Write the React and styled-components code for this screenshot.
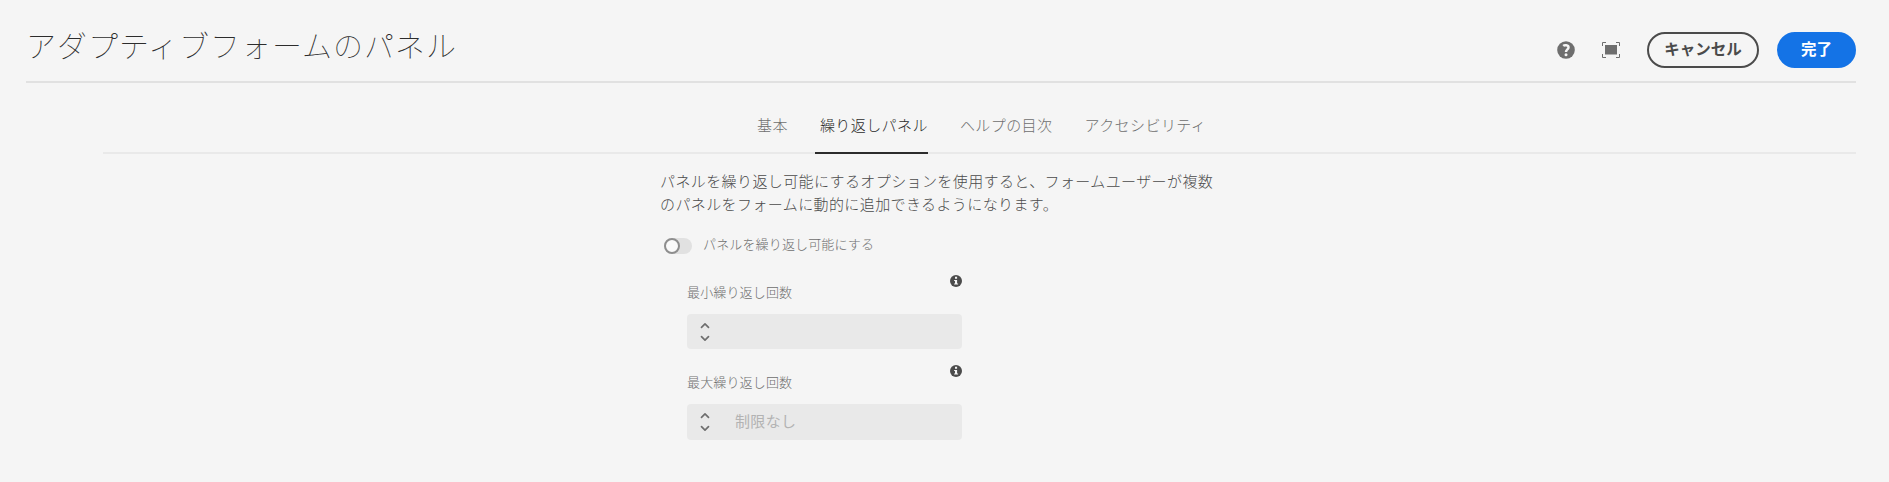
import React from "react";
import styled, { createGlobalStyle } from "styled-components";

const GlobalStyle = createGlobalStyle`
  * { box-sizing: border-box; }
  body {
    margin: 0;
    background: #f5f5f5;
    font-family: "Noto Sans CJK JP", sans-serif;
    font-weight: 200;
    color: #4b4b4b;
  }
  button, input { font-family: inherit; }
`;

const Page = styled.div`
  height: 482px;
  padding: 0 33px 0 26px;
  overflow: hidden;
`;

const Header = styled.header`
  height: 83px;
  display: flex;
  align-items: flex-start;
  justify-content: space-between;
  border-bottom: 2px solid #e1e1e1;
`;

const Title = styled.h1`
  margin: 23px 0 0;
  font-size: 30px;
  line-height: 42px;
  font-weight: 100;
  letter-spacing: 0.98px;
  color: #2c2c2c;
  white-space: nowrap;
`;

const Actions = styled.div`
  display: flex;
  align-items: center;
  margin-top: 32px;
`;

const IconButton = styled.button`
  display: flex;
  width: 18px;
  height: 18px;
  padding: 0;
  margin-right: 27px;
  border: 0;
  background: none;
  color: #6e6e6e;
`;

const PillButton = styled.button`
  width: ${(p) => (p.$primary ? 79 : 112)}px;
  height: 36px;
  padding: 0 0 4px;
  margin-left: ${(p) => (p.$primary ? 18 : 0)}px;
  border: 2px solid ${(p) => (p.$primary ? "#1473e6" : "#4b4b4b")};
  border-radius: 18px;
  background: ${(p) => (p.$primary ? "#1473e6" : "transparent")};
  color: ${(p) => (p.$primary ? "#fff" : "#4b4b4b")};
  font-size: 15.5px;
  line-height: 20px;
  font-weight: 700;
  white-space: nowrap;
`;

const Tabs = styled.nav`
  height: 71px;
  margin-left: 77px;
  padding-left: 649px;
  display: flex;
  align-items: flex-end;
  gap: 27px;
  border-bottom: 2px solid #e9e9e9;
`;

const Tab = styled.a`
  height: 45px;
  margin-bottom: -2px;
  padding-left: 5px;
  border-bottom: 2px solid ${(p) => (p.$active ? "#2c2c2c" : "transparent")};
  color: ${(p) => (p.$active ? "#2c2c2c" : "#6e6e6e")};
  font-size: 15px;
  line-height: 32px;
  letter-spacing: 0.43px;
  white-space: nowrap;
`;

const Content = styled.main`
  width: 570px;
  margin-left: 633px;
  padding-top: 15px;
`;

const Description = styled.p`
  margin: 0;
  padding-left: 1px;
  font-size: 15px;
  line-height: 23px;
  letter-spacing: 0.4px;
  white-space: nowrap;
`;

const ToggleRow = styled.label`
  display: flex;
  align-items: center;
  gap: 11px;
  height: 16px;
  margin: 23px 0 0 5px;
`;

const Track = styled.span`
  width: 28px;
  height: 16px;
  border-radius: 8px;
  background: #e1e1e1;
`;

const Knob = styled.span`
  display: block;
  width: 16px;
  height: 16px;
  border: 2px solid #8e8e8e;
  border-radius: 50%;
  background: #fafafa;
`;

const LabelText = styled.span`
  margin-top: -4px;
  font-size: 13px;
  line-height: 18px;
  letter-spacing: 0.15px;
  color: #6e6e6e;
  white-space: nowrap;
`;

const Fields = styled.div`
  width: 275px;
  margin: 21px 0 0 28px;
`;

const Field = styled.div`
  height: 90.3px;
`;

const FieldHead = styled.div`
  height: 38.9px;
  display: flex;
  justify-content: space-between;
  align-items: flex-start;
`;

const FieldLabel = styled(LabelText)`
  margin-top: 8px;
`;

const InfoMark = styled.span`
  display: flex;
  width: 12px;
  height: 12px;
  color: #4b4b4b;
`;

const NumberBox = styled.div`
  height: 35.5px;
  display: flex;
  align-items: center;
  padding-left: 13px;
  border-radius: 4px;
  background: #e9e9e9;
`;

const Stepper = styled.span`
  display: flex;
  width: 10px;
  height: 20px;
  color: #6e6e6e;
`;

const Input = styled.input`
  flex: 1;
  min-width: 0;
  height: 32px;
  margin-left: 25px;
  padding: 0 0 3px;
  border: 0;
  outline: 0;
  background: transparent;
  font-size: 15px;
  font-weight: 400;
  letter-spacing: 0.35px;
  &::placeholder { color: #b3b3b3; opacity: 1; }
`;

const HelpIcon = () => (
  <svg width="18" height="18" viewBox="0 0 18 18" fill="none">
    <circle cx="9" cy="9" r="8.8" fill="currentColor" />
    <path d="M6.200 4.900C7.400 3.900 11.500 3.800 11.500 6.400C11.500 8.300 9 8.400 9 10.900" stroke="#f5f5f5" strokeWidth="2.500" />
    <circle cx="9" cy="13.700" r="1.500" fill="#f5f5f5" />
  </svg>
);

const FullScreenIcon = () => (
  <svg width="18" height="18" viewBox="0 0 18 18" fill="none">
    <rect x="3" y="4" width="12" height="9.500" fill="currentColor" />
    <path d="M.5 5V1.500H4M14 1.500h3.500V5M17.500 13v3.500H14M4 16.500H.5V13" stroke="currentColor" />
  </svg>
);

const InfoIcon = () => (
  <svg width="12" height="12" viewBox="0 0 12 12">
    <circle cx="6" cy="6" r="6" fill="currentColor" />
    <path d="M5 1.800h2.100v1.900H5zM4.100 4.900h3v3.500h1v1.200H4.100V8.400h.9V6.100h-.9z" fill="#f5f5f5" />
  </svg>
);

const ChevronsIcon = () => (
  <svg width="10" height="20" viewBox="0 0 10 20" fill="none" stroke="currentColor" strokeWidth="1.700" strokeLinecap="round" strokeLinejoin="round">
    <path d="M1.500 5.300L5 1.900l3.500 3.400M1.500 14.700L5 18.100l3.500-3.400" />
  </svg>
);

const TABS = ["基本", "繰り返しパネル", "ヘルプの目次", "アクセシビリティ"];
const FIELDS = [
  { label: "最小繰り返し回数", placeholder: "" },
  { label: "最大繰り返し回数", placeholder: "制限なし" },
];

export default function App() {
  return (
    <Page lang="ja">
      <GlobalStyle />
      <Header>
        <Title>アダプティブフォームのパネル</Title>
        <Actions>
          <IconButton><HelpIcon /></IconButton>
          <IconButton><FullScreenIcon /></IconButton>
          <PillButton>キャンセル</PillButton>
          <PillButton $primary>完了</PillButton>
        </Actions>
      </Header>
      <Tabs>
        {TABS.map((name, i) => (
          <Tab key={name} $active={i === 1}>{name}</Tab>
        ))}
      </Tabs>
      <Content>
        <Description>
          パネルを繰り返し可能にするオプションを使用すると、フォームユーザーが複数
          <br />
          のパネルをフォームに動的に追加できるようになります。
        </Description>
        <ToggleRow>
          <Track><Knob /></Track>
          <LabelText>パネルを繰り返し可能にする</LabelText>
        </ToggleRow>
        <Fields>
          {FIELDS.map((f) => (
            <Field key={f.label}>
              <FieldHead>
                <FieldLabel>{f.label}</FieldLabel>
                <InfoMark><InfoIcon /></InfoMark>
              </FieldHead>
              <NumberBox>
                <Stepper><ChevronsIcon /></Stepper>
                <Input placeholder={f.placeholder} />
              </NumberBox>
            </Field>
          ))}
        </Fields>
      </Content>
    </Page>
  );
}
